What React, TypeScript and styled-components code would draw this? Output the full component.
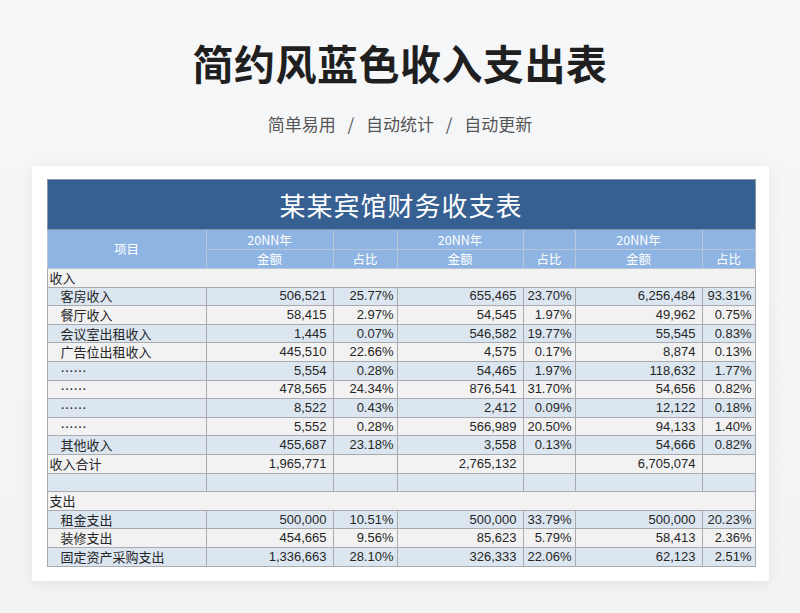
import React from "react";
import styled, { createGlobalStyle } from "styled-components";

const Global = createGlobalStyle`
  html, body { margin: 0; padding: 0; background: #f4f5f7; }
  body { font-family: "Liberation Sans", "Noto Sans CJK SC", sans-serif; }
`;

const Page = styled.div`
  width: 800px;
  height: 613px;
  display: flex;
  flex-direction: column;
  align-items: center;
  background: linear-gradient(#f6f7f9, #f2f3f5);
  overflow: hidden;
`;

const Title = styled.h1`
  margin: 34px 0 0;
  font-family: "Noto Sans CJK SC", sans-serif;
  font-weight: 700;
  font-size: 41px;
  line-height: 56px;
  color: #1f1f1f;
  letter-spacing: 0.5px;
`;

const Subtitle = styled.div`
  margin-top: 22px;
  font-family: "Noto Sans CJK SC", sans-serif;
  font-size: 17px;
  line-height: 24px;
  color: #555;
  word-spacing: 8px;
`;

const Card = styled.div`
  margin-top: 30px;
  width: 737px;
  box-sizing: border-box;
  padding: 13px 14px 14px 15px;
  background: #fff;
  box-shadow: 0 3px 14px rgba(0, 0, 0, 0.07);
`;

const Table = styled.table`
  width: 708px;
  border-collapse: collapse;
  table-layout: fixed;
  border: 1px solid #9a9ea4;
  font-family: "Liberation Sans", "Noto Sans CJK SC", sans-serif;
  font-size: 13px;
  color: #262626;
`;

const TitleCell = styled.th`
  height: 49px;
  background: #376092;
  color: #fff;
  font-family: "Noto Sans CJK SC", sans-serif;
  font-weight: 400;
  font-size: 26px;
  letter-spacing: 1px;
  padding: 0;
  border: 1px solid #8a97a8;
`;

const HeadCell = styled.th<{ $h: number }>`
  height: ${(p) => p.$h}px;
  padding: 0;
  background: #8db4e2;
  color: #fff;
  font-family: "Noto Sans CJK SC", sans-serif;
  font-weight: 400;
  font-size: 12.5px;
  line-height: 14px;
  border: 1px solid #b9c6d6;
`;

const Row = styled.tr<{ $blue: boolean }>`
  height: 18.6px;
  background: ${(p) => (p.$blue ? "#dce6f1" : "#f2f2f2")};
`;

const Label = styled.td<{ $indent: boolean }>`
  padding: 0 0 0 ${(p) => (p.$indent ? 13 : 2)}px;
  border: 1px solid #a9abae;
  font-family: "Noto Sans CJK SC", sans-serif;
  font-size: 13px;
  line-height: 16px;
  white-space: nowrap;
  overflow: hidden;
`;

const Section = styled.td`
  padding: 0 0 0 2px;
  border: 1px solid #a9abae;
  font-family: "Noto Sans CJK SC", sans-serif;
  font-size: 13px;
  line-height: 16px;
`;

const Num = styled.td<{ $pad: number }>`
  padding: 0 ${(p) => p.$pad}px 0 0;
  border: 1px solid #a9abae;
  text-align: right;
  line-height: 16px;
  white-space: nowrap;
`;

type R = { label: string; indent: boolean; v: string[] };

const income: R[] = [
  { label: "客房收入", indent: true, v: ["506,521", "25.77%", "655,465", "23.70%", "6,256,484", "93.31%"] },
  { label: "餐厅收入", indent: true, v: ["58,415", "2.97%", "54,545", "1.97%", "49,962", "0.75%"] },
  { label: "会议室出租收入", indent: true, v: ["1,445", "0.07%", "546,582", "19.77%", "55,545", "0.83%"] },
  { label: "广告位出租收入", indent: true, v: ["445,510", "22.66%", "4,575", "0.17%", "8,874", "0.13%"] },
  { label: "……", indent: true, v: ["5,554", "0.28%", "54,465", "1.97%", "118,632", "1.77%"] },
  { label: "……", indent: true, v: ["478,565", "24.34%", "876,541", "31.70%", "54,656", "0.82%"] },
  { label: "……", indent: true, v: ["8,522", "0.43%", "2,412", "0.09%", "12,122", "0.18%"] },
  { label: "……", indent: true, v: ["5,552", "0.28%", "566,989", "20.50%", "94,133", "1.40%"] },
  { label: "其他收入", indent: true, v: ["455,687", "23.18%", "3,558", "0.13%", "54,666", "0.82%"] },
  { label: "收入合计", indent: false, v: ["1,965,771", "", "2,765,132", "", "6,705,074", ""] },
  { label: "", indent: false, v: ["", "", "", "", "", ""] },
];

const expense: R[] = [
  { label: "租金支出", indent: true, v: ["500,000", "10.51%", "500,000", "33.79%", "500,000", "20.23%"] },
  { label: "装修支出", indent: true, v: ["454,665", "9.56%", "85,623", "5.79%", "58,413", "2.36%"] },
  { label: "固定资产采购支出", indent: true, v: ["1,336,663", "28.10%", "326,333", "22.06%", "62,123", "2.51%"] },
];

const pads = [6, 3, 6, 3, 6, 3];

function DataRow({ r, blue }: { r: R; blue: boolean }) {
  return (
    <Row $blue={blue}>
      <Label $indent={r.indent}>{r.label}</Label>
      {r.v.map((x, i) => (
        <Num key={i} $pad={pads[i]}>
          {x}
        </Num>
      ))}
    </Row>
  );
}

export default function App() {
  return (
    <Page>
      <Global />
      <Title>简约风蓝色收入支出表</Title>
      <Subtitle>简单易用 / 自动统计 / 自动更新</Subtitle>
      <Card>
        <Table>
          <colgroup>
            <col style={{ width: 159 }} />
            <col style={{ width: 127 }} />
            <col style={{ width: 64 }} />
            <col style={{ width: 126 }} />
            <col style={{ width: 52 }} />
            <col style={{ width: 127 }} />
            <col style={{ width: 53 }} />
          </colgroup>
          <thead>
            <tr>
              <TitleCell colSpan={7}>某某宾馆财务收支表</TitleCell>
            </tr>
            <tr>
              <HeadCell $h={19} rowSpan={2}>项目</HeadCell>
              <HeadCell $h={19}>20NN年</HeadCell>
              <HeadCell $h={19} />
              <HeadCell $h={19}>20NN年</HeadCell>
              <HeadCell $h={19} />
              <HeadCell $h={19}>20NN年</HeadCell>
              <HeadCell $h={19} />
            </tr>
            <tr>
              <HeadCell $h={18}>金额</HeadCell>
              <HeadCell $h={18}>占比</HeadCell>
              <HeadCell $h={18}>金额</HeadCell>
              <HeadCell $h={18}>占比</HeadCell>
              <HeadCell $h={18}>金额</HeadCell>
              <HeadCell $h={18}>占比</HeadCell>
            </tr>
          </thead>
          <tbody>
            <Row $blue={false}>
              <Section colSpan={7}>收入</Section>
            </Row>
            {income.map((r, i) => (
              <DataRow key={"i" + i} r={r} blue={i % 2 === 0} />
            ))}
            <Row $blue={false}>
              <Section colSpan={7}>支出</Section>
            </Row>
            {expense.map((r, i) => (
              <DataRow key={"e" + i} r={r} blue={i % 2 === 0} />
            ))}
          </tbody>
        </Table>
      </Card>
    </Page>
  );
}
